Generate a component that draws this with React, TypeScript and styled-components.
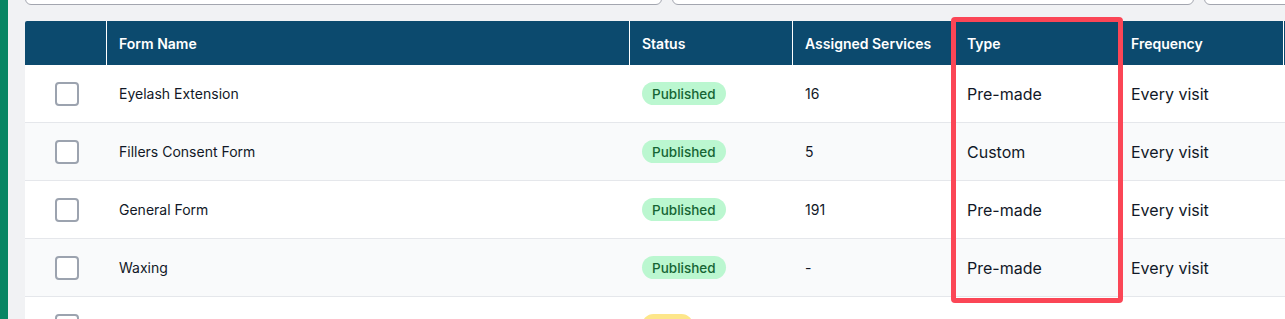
import styled, { createGlobalStyle } from "styled-components";

const GlobalStyle = createGlobalStyle`
  html, body {
    margin: 0;
    padding: 0;
    background: #f3f4f6;
    font-family: Inter, "Noto Sans", sans-serif;
    overflow: hidden;
  }
`;

const Page = styled.div`
  display: flex;
  height: 319px;
  overflow: hidden;
`;

const SideStrip = styled.div`
  width: 8px;
  flex-shrink: 0;
  background: #078563;
`;

const Main = styled.main`
  flex: 1;
  padding: 0 0 0 17px;
  background: #f1f2f4;
  min-width: 0;
`;

const Filters = styled.div`
  display: flex;
  gap: 10px;
  margin-top: -36px;
  margin-bottom: 16px;
`;

const FilterBox = styled.div<{ w: number }>`
  width: ${(p) => p.w}px;
  flex-shrink: 0;
  height: 41px;
  box-sizing: border-box;
  background: #fff;
  border: 1px solid #a3a6af;
  border-radius: 6px;
`;

const TableWrap = styled.div`
  position: relative;
`;

const Table = styled.div`
  display: grid;
  grid-template-columns: 81px 523px 163px 162px 164px 165px 160px;
  background: #fff;
  border-radius: 2px 0 0 0;
  overflow: hidden;
`;

const HeadCell = styled.div<{ first?: boolean }>`
  height: 44px;
  box-sizing: border-box;
  display: flex;
  align-items: center;
  padding: 0 12px;
  background: #0c4a6e;
  color: #fff;
  font-size: 14px;
  font-weight: 600;
  border-left: ${(p) => (p.first ? "none" : "1px solid #fff")};
`;

const Cell = styled.div<{ striped?: boolean; large?: boolean; center?: boolean }>`
  height: 58px;
  box-sizing: border-box;
  display: flex;
  align-items: center;
  justify-content: ${(p) => (p.center ? "center" : "flex-start")};
  padding: 0 12px 0 13px;
  background: ${(p) => (p.striped ? "#f9fafb" : "#fff")};
  border-bottom: 1px solid #e5e7eb;
  color: #111827;
  font-size: ${(p) => (p.large ? "16px" : "14px")};
  white-space: nowrap;
`;

const Checkbox = styled.span`
  width: 24px;
  height: 24px;
  box-sizing: border-box;
  border: 2px solid #9ca3af;
  border-radius: 4px;
  background: #fff;
  margin-left: 1px;
`;

const Badge = styled.span<{ tone: "green" | "yellow" }>`
  display: inline-flex;
  align-items: center;
  height: 23px;
  min-width: 31px;
  padding: 0 10px;
  border-radius: 12px;
  font-size: 13.5px;
  font-weight: 500;
  background: ${(p) => (p.tone === "green" ? "#bbf7d0" : "#fde68a")};
  color: ${(p) => (p.tone === "green" ? "#166534" : "#854d0e")};
`;

const Highlight = styled.div`
  position: absolute;
  left: 926px;
  top: -4px;
  width: 172px;
  height: 286px;
  box-sizing: border-box;
  border: 5px solid #fb4656;
  border-radius: 4px;
  pointer-events: none;
`;

interface FormRow {
  name: string;
  status: "Published" | "Draft";
  services: string;
  type: string;
  frequency: string;
}

// last row sits below the fold; only its checkbox and pill peek in
const rows: FormRow[] = [
  { name: "Eyelash Extension", status: "Published", services: "16", type: "Pre-made", frequency: "Every visit" },
  { name: "Fillers Consent Form", status: "Published", services: "5", type: "Custom", frequency: "Every visit" },
  { name: "General Form", status: "Published", services: "191", type: "Pre-made", frequency: "Every visit" },
  { name: "Waxing", status: "Published", services: "-", type: "Pre-made", frequency: "Every visit" },
  { name: "", status: "Draft", services: "", type: "", frequency: "" },
];

const headers = ["", "Form Name", "Status", "Assigned Services", "Type", "Frequency", ""];

export default function App() {
  return (
    <>
      <GlobalStyle />
      <Page>
        <SideStrip />
        <Main>
          <Filters>
            <FilterBox w={637} />
            <FilterBox w={522} />
            <FilterBox w={200} />
          </Filters>
          <TableWrap>
            <Table>
              {headers.map((h, i) => (
                <HeadCell key={i} first={i === 0}>
                  {h}
                </HeadCell>
              ))}
              {rows.map((r, i) => {
                const striped = i % 2 === 1;
                const published = r.status === "Published";
                return [
                  <Cell key={`c${i}`} striped={striped} center>
                    <Checkbox />
                  </Cell>,
                  <Cell key={`n${i}`} striped={striped}>{r.name}</Cell>,
                  <Cell key={`s${i}`} striped={striped}>
                    <Badge tone={published ? "green" : "yellow"}>{published ? r.status : ""}</Badge>
                  </Cell>,
                  <Cell key={`a${i}`} striped={striped}>{r.services}</Cell>,
                  <Cell key={`t${i}`} striped={striped} large>{r.type}</Cell>,
                  <Cell key={`f${i}`} striped={striped} large>{r.frequency}</Cell>,
                  <Cell key={`x${i}`} striped={striped} />,
                ];
              })}
            </Table>
            <Highlight />
          </TableWrap>
        </Main>
      </Page>
    </>
  );
}
